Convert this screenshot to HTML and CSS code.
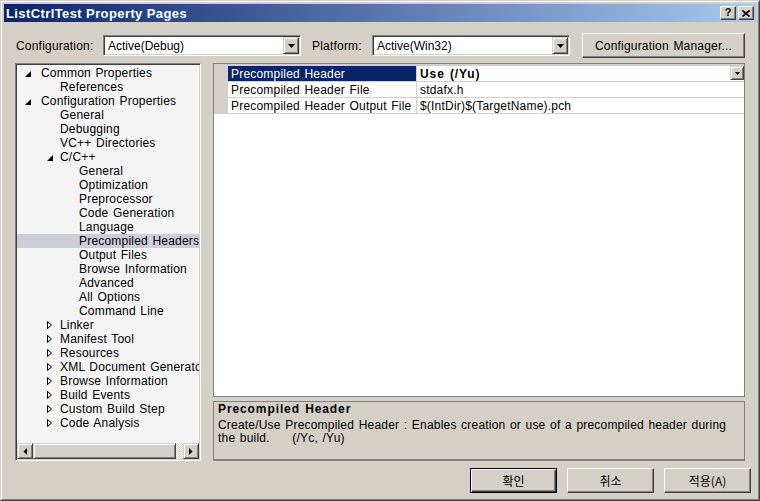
FILE: index.html
```html
<!DOCTYPE html>
<html>
<head>
<meta charset="utf-8">
<title>ListCtrlTest Property Pages</title>
<link rel="stylesheet" href="styles.css">
</head>
<body>
<div class="window">
  <div class="window-inner">
    <div class="titlebar">
      <span class="title">ListCtrlTest Property Pages</span>
      <div class="caption-btns">
        <span class="cap-btn cap-help">?</span>
        <span class="cap-btn"><svg width="8" height="7" viewBox="0 0 8 7"><path d="M0.5 0.5 L7.5 6.5 M7.5 0.5 L0.5 6.5" stroke="#000" stroke-width="1.6" fill="none"/></svg></span>
      </div>
    </div>
    <div class="content">
      <div class="toolbar">
        <span class="lbl lbl-config">Configuration:</span>
        <div class="combo">
          <span class="combo-text">Active(Debug)</span>
          <span class="drop-btn"><svg width="7" height="4" viewBox="0 0 7 4"><path d="M0 0H7L3.5 4Z" fill="#000"/></svg></span>
        </div>
        <span class="lbl lbl-platform">Platform:</span>
        <div class="combo">
          <span class="combo-text">Active(Win32)</span>
          <span class="drop-btn"><svg width="7" height="4" viewBox="0 0 7 4"><path d="M0 0H7L3.5 4Z" fill="#000"/></svg></span>
        </div>
        <button class="btn btn-cfgmgr">Configuration Manager...</button>
      </div>

      <div class="main">
        <div class="tree">
          <div class="tree-list">
            <div class="row l0"><span class="tog"><svg class="exp" width="6" height="6" viewBox="0 0 6 6"><path d="M6 0V6H0Z" fill="#000"/></svg></span><span class="txt">Common Properties</span></div>
            <div class="row l1"><span class="tog"></span><span class="txt">References</span></div>
            <div class="row l0"><span class="tog"><svg class="exp" width="6" height="6" viewBox="0 0 6 6"><path d="M6 0V6H0Z" fill="#000"/></svg></span><span class="txt">Configuration Properties</span></div>
            <div class="row l1"><span class="tog"></span><span class="txt">General</span></div>
            <div class="row l1"><span class="tog"></span><span class="txt">Debugging</span></div>
            <div class="row l1"><span class="tog"></span><span class="txt">VC++ Directories</span></div>
            <div class="row l1"><span class="tog"><svg class="exp" width="6" height="6" viewBox="0 0 6 6"><path d="M6 0V6H0Z" fill="#000"/></svg></span><span class="txt">C/C++</span></div>
            <div class="row l2"><span class="tog"></span><span class="txt">General</span></div>
            <div class="row l2"><span class="tog"></span><span class="txt">Optimization</span></div>
            <div class="row l2"><span class="tog"></span><span class="txt">Preprocessor</span></div>
            <div class="row l2"><span class="tog"></span><span class="txt">Code Generation</span></div>
            <div class="row l2"><span class="tog"></span><span class="txt">Language</span></div>
            <div class="row l2 selected"><span class="tog"></span><span class="txt">Precompiled Headers</span></div>
            <div class="row l2"><span class="tog"></span><span class="txt">Output Files</span></div>
            <div class="row l2"><span class="tog"></span><span class="txt">Browse Information</span></div>
            <div class="row l2"><span class="tog"></span><span class="txt">Advanced</span></div>
            <div class="row l2"><span class="tog"></span><span class="txt">All Options</span></div>
            <div class="row l2"><span class="tog"></span><span class="txt">Command Line</span></div>
            <div class="row l1"><span class="tog"><svg class="col" width="5" height="8" viewBox="0 0 5 8"><path d="M0.5 0.5L4.5 4L0.5 7.5Z" fill="none" stroke="#000" stroke-width="1"/></svg></span><span class="txt">Linker</span></div>
            <div class="row l1"><span class="tog"><svg class="col" width="5" height="8" viewBox="0 0 5 8"><path d="M0.5 0.5L4.5 4L0.5 7.5Z" fill="none" stroke="#000" stroke-width="1"/></svg></span><span class="txt">Manifest Tool</span></div>
            <div class="row l1"><span class="tog"><svg class="col" width="5" height="8" viewBox="0 0 5 8"><path d="M0.5 0.5L4.5 4L0.5 7.5Z" fill="none" stroke="#000" stroke-width="1"/></svg></span><span class="txt">Resources</span></div>
            <div class="row l1"><span class="tog"><svg class="col" width="5" height="8" viewBox="0 0 5 8"><path d="M0.5 0.5L4.5 4L0.5 7.5Z" fill="none" stroke="#000" stroke-width="1"/></svg></span><span class="txt">XML Document Generator</span></div>
            <div class="row l1"><span class="tog"><svg class="col" width="5" height="8" viewBox="0 0 5 8"><path d="M0.5 0.5L4.5 4L0.5 7.5Z" fill="none" stroke="#000" stroke-width="1"/></svg></span><span class="txt">Browse Information</span></div>
            <div class="row l1"><span class="tog"><svg class="col" width="5" height="8" viewBox="0 0 5 8"><path d="M0.5 0.5L4.5 4L0.5 7.5Z" fill="none" stroke="#000" stroke-width="1"/></svg></span><span class="txt">Build Events</span></div>
            <div class="row l1"><span class="tog"><svg class="col" width="5" height="8" viewBox="0 0 5 8"><path d="M0.5 0.5L4.5 4L0.5 7.5Z" fill="none" stroke="#000" stroke-width="1"/></svg></span><span class="txt">Custom Build Step</span></div>
            <div class="row l1"><span class="tog"><svg class="col" width="5" height="8" viewBox="0 0 5 8"><path d="M0.5 0.5L4.5 4L0.5 7.5Z" fill="none" stroke="#000" stroke-width="1"/></svg></span><span class="txt">Code Analysis</span></div>
          </div>
          <div class="hscroll">
            <span class="sb-btn"><svg width="4" height="7" viewBox="0 0 4 7"><path d="M4 0V7L0.5 3.5Z" fill="#000"/></svg></span>
            <span class="sb-thumb"></span>
            <span class="sb-track"></span>
            <span class="sb-btn"><svg width="4" height="7" viewBox="0 0 4 7"><path d="M0 0V7L3.5 3.5Z" fill="#000"/></svg></span>
          </div>
        </div>

        <div class="right">
          <div class="grid">
            <div class="grid-top"></div>
            <div class="prow">
              <span class="gutter"></span>
              <span class="pname sel">Precompiled Header</span>
              <span class="pval"><b class="pval-text">Use (/Yu)</b><span class="cell-drop"><svg width="5" height="3" viewBox="0 0 5 3"><path d="M0 0H5L2.5 3Z" fill="#000"/></svg></span></span>
            </div>
            <div class="prow">
              <span class="gutter"></span>
              <span class="pname">Precompiled Header File</span>
              <span class="pval">stdafx.h</span>
            </div>
            <div class="prow">
              <span class="gutter"></span>
              <span class="pname">Precompiled Header Output File</span>
              <span class="pval">$(IntDir)$(TargetName).pch</span>
            </div>
          </div>
          <div class="desc">
            <div class="desc-title">Precompiled Header</div>
            <div class="desc-text">Create/Use Precompiled Header : Enables creation or use of a precompiled header during<br>the build.&nbsp;&nbsp;&nbsp;&nbsp;&nbsp;(/Yc, /Yu)</div>
          </div>
        </div>
      </div>

      <div class="buttons">
        <button class="btn btn-dlg btn-default">확인</button>
        <button class="btn btn-dlg">취소</button>
        <button class="btn btn-dlg">적용(A)</button>
      </div>
    </div>
  </div>
</div>
</body>
</html>
```

FILE: styles.css
```css
* { box-sizing: border-box; }
html, body { margin: 0; padding: 0; }
body {
  width: 760px;
  height: 501px;
  overflow: hidden;
  background: #d4d0c8;
  font-family: "Liberation Sans", Arial, "Noto Sans CJK KR", sans-serif;
  font-size: 12px;
  letter-spacing: 0.2px;
  word-spacing: 1px;
  color: #000;
}
.window {
  width: 760px;
  height: 501px;
  border: 1px solid;
  border-color: #d4d0c8 #404040 #404040 #d4d0c8;
  background: #d4d0c8;
}
.window-inner {
  height: 100%;
  border: 1px solid;
  border-color: #ffffff #808080 #808080 #ffffff;
  padding: 2px;
  display: flex;
  flex-direction: column;
}
.titlebar {
  flex: none;
  height: 18px;
  background: linear-gradient(to right, #0a246a, #a6caf0);
  display: flex;
  align-items: center;
  padding-left: 2px;
}
.title {
  flex: 1;
  color: #fff;
  font-weight: bold;
  font-size: 13px;
  letter-spacing: 0.4px;
  word-spacing: 0;
  white-space: nowrap;
}
.caption-btns { display: flex; gap: 2px; margin-right: 2px; }
.cap-btn {
  width: 16px;
  height: 14px;
  background: #d4d0c8;
  border: 1px solid;
  border-color: #ffffff #404040 #404040 #ffffff;
  box-shadow: inset -1px -1px #808080;
  display: flex;
  align-items: center;
  justify-content: center;
}
.cap-help { font-weight: bold; font-size: 11px; line-height: 11px; padding-bottom: 1px; letter-spacing: 0; }

.content {
  flex: 1;
  display: flex;
  flex-direction: column;
  padding: 0 4px;
}
.toolbar {
  display: flex;
  align-items: center;
  height: 25px;
  margin: 11px 7px 0;
}
.lbl { white-space: nowrap; }
.lbl-config { width: 88px; padding-left: 1px; }
.lbl-platform { width: 60px; margin-left: 11px; }
.combo {
  width: 198px;
  height: 21px;
  background: #fff;
  border: 1px solid;
  border-color: #808080 #ffffff #ffffff #808080;
  box-shadow: inset 1px 1px #404040, inset -1px -1px #d4d0c8;
  padding: 1px;
  display: flex;
  align-items: center;
}
.combo-text { flex: 1; padding-left: 3px; white-space: nowrap; letter-spacing: 0; }
.drop-btn, .sb-btn, .cell-drop {
  background: #d4d0c8;
  border: 1px solid;
  border-color: #d4d0c8 #404040 #404040 #d4d0c8;
  box-shadow: inset 1px 1px #ffffff, inset -1px -1px #808080;
  display: flex;
  align-items: center;
  justify-content: center;
}
.drop-btn { width: 16px; height: 17px; }

.btn {
  font-family: "Liberation Sans", Arial, "Noto Sans CJK KR", sans-serif;
  font-size: 12px;
  letter-spacing: 0.2px;
  word-spacing: 1px;
  color: #000;
  background: #d4d0c8;
  border: 1px solid;
  border-color: #ffffff #404040 #404040 #ffffff;
  box-shadow: inset -1px -1px #808080;
  padding: 0;
  margin: 0;
}
.btn-cfgmgr { width: 163px; height: 25px; margin-left: 12px; }

.main {
  display: flex;
  gap: 12px;
  height: 398px;
  margin: 5px 7px 0;
}
.tree {
  width: 186px;
  height: 398px;
  background: #f4f4f4;
  border: 1px solid;
  border-color: #808080 #ffffff #ffffff #808080;
  box-shadow: inset 1px 1px #404040, inset -1px -1px #d4d0c8;
  padding: 1px;
  display: flex;
  flex-direction: column;
}
.tree-list { flex: 1; overflow: hidden; padding-top: 1px; }
.row {
  height: 14px;
  line-height: 14px;
  display: flex;
  align-items: center;
  white-space: nowrap;
}
.row.l0 { padding-left: 5px; }
.row.l1 { padding-left: 24px; }
.row.l2 { padding-left: 43px; }
.tog { flex: none; width: 19px; height: 14px; display: flex; align-items: center; }
.row.l0 .tog { padding-left: 3px; }
.row.l1 .tog { padding-left: 6px; }
.tog .exp { margin-top: 1px; }
.txt { white-space: nowrap; }
.row.selected { background: #cdcdd9; }

.hscroll { flex: none; height: 16px; display: flex; }
.sb-btn { width: 16px; height: 16px; }
.sb-thumb {
  width: 143px;
  height: 16px;
  background: #d4d0c8;
  border: 1px solid;
  border-color: #d4d0c8 #404040 #404040 #d4d0c8;
  box-shadow: inset 1px 1px #ffffff, inset -1px -1px #808080;
}
.sb-track {
  flex: 1;
  background-color: #ffffff;
  background-image: repeating-conic-gradient(#d4d0c8 0 25%, #ffffff 0 50%);
  background-size: 2px 2px;
}

.right {
  width: 532px;
  display: flex;
  flex-direction: column;
  gap: 4px;
}
.grid {
  height: 334px;
  background: #fff;
  border: 1px solid #808080;
}
.grid-top { height: 2px; background: #d4d0c8; }
.prow {
  display: grid;
  grid-template-columns: 14px 189px 1fr;
  height: 16px;
  border-bottom: 1px solid #d4d0c8;
  line-height: 15px;
  white-space: nowrap;
}
.prow .pname, .prow .pval { padding-top: 1px; }
.gutter { background: #d4d0c8; }
.pname { padding-left: 3px; border-right: 1px solid #d4d0c8; overflow: hidden; }
.pname.sel { background: #0a246a; color: #fff; }
.pval { padding-left: 3px; display: flex; align-items: flex-start; overflow: hidden; }
.pval-text { flex: 1; font-weight: bold; letter-spacing: 0.9px; line-height: 14px; }
.cell-drop { width: 14px; height: 14px; flex: none; margin-top: -1px; }

.desc {
  height: 60px;
  border: 1px solid #808080;
  border-bottom-width: 2px;
  padding: 0 4px;
}
.desc-title { font-weight: bold; line-height: 15px; letter-spacing: 0.9px; }
.desc-text { line-height: 13px; margin-top: 2px; }

.buttons {
  display: flex;
  justify-content: flex-end;
  gap: 10px;
  margin-top: 7px;
  margin-right: 1px;
}
.btn-dlg {
  width: 87px;
  height: 25px;
  font-family: "Noto Sans CJK KR", "Liberation Sans", sans-serif;
  letter-spacing: 0;
}
.btn-default {
  border: 1px solid #000;
  box-shadow: inset 1px 1px #ffffff, inset -1px -1px #404040, inset -2px -2px #808080;
}
```
